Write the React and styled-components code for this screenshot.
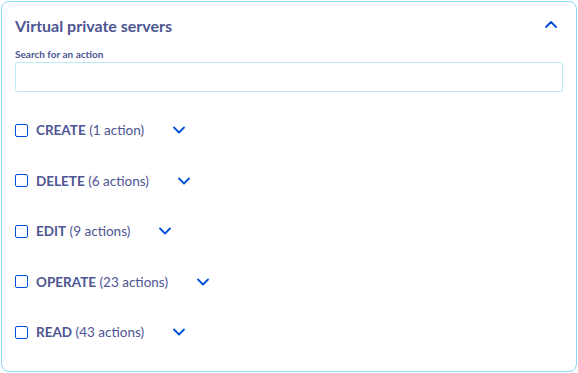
import React from "react";
import styled, { createGlobalStyle } from "styled-components";

const GlobalStyle = createGlobalStyle`
  body {
    margin: 0;
    background: #ffffff;
    font-family: Lato, "Liberation Sans", sans-serif;
  }
`;

const groups = [
  { name: "CREATE", count: "1 action" },
  { name: "DELETE", count: "6 actions" },
  { name: "EDIT", count: "9 actions" },
  { name: "OPERATE", count: "23 actions" },
  { name: "READ", count: "43 actions" },
];

const Chevron = ({ up }) => (
  <svg width="12" height="8" viewBox="0 0 12 8" fill="none">
    <path
      d={up ? "M1 7 L6 2 L11 7" : "M1 1.5 L6 6.5 L11 1.5"}
      stroke="#0050d7"
      strokeWidth="1.8"
      strokeLinecap="round"
      strokeLinejoin="round"
    />
  </svg>
);

const App = () => {
  return (
    <>
      <GlobalStyle />
      <Page>
        <Card>
          <Header>
            <Title>Virtual private servers</Title>
            <IconButton>
              <Chevron up />
            </IconButton>
          </Header>
          <Label>Search for an action</Label>
          <SearchInput />
          <List>
            {groups.map((g) => (
              <Row key={g.name}>
                <Box />
                <RowText>
                  <strong>{g.name}</strong> ({g.count})
                </RowText>
                <Toggle>
                  <Chevron />
                </Toggle>
              </Row>
            ))}
          </List>
        </Card>
      </Page>
    </>
  );
};

export default App;

const Page = styled.div`
  padding: 1px 1px 0 1px;
`;

const Card = styled.div`
  width: 576px;
  height: 371px;
  box-sizing: border-box;
  border: 1px solid #8ad8f5;
  border-radius: 8px;
  padding: 13px 14px 0 13px;
`;

const Header = styled.div`
  display: flex;
  align-items: center;
  justify-content: space-between;
  height: 20px;
`;

const Title = styled.div`
  color: #4d5592;
  font-size: 16px;
  font-weight: 700;
`;

const IconButton = styled.div`
  display: flex;
  align-items: center;
  padding-right: 5px;
  margin-top: -2px;
`;

const Label = styled.div`
  margin-top: 13px;
  color: #4d5592;
  font-size: 10px;
  font-weight: 700;
  line-height: 12px;
`;

const SearchInput = styled.input`
  display: block;
  margin-top: 2px;
  width: 548px;
  height: 30px;
  box-sizing: border-box;
  border: 1px solid #bfeafb;
  border-radius: 2px;
  outline: none;
`;

const List = styled.div`
  display: flex;
  flex-direction: column;
  margin-top: 27px;
  gap: 28.5px;
`;

const Row = styled.div`
  display: flex;
  align-items: center;
  height: 22px;
`;

const Box = styled.div`
  width: 13px;
  height: 13px;
  box-sizing: border-box;
  border: 1.5px solid #0050d7;
  border-radius: 2px;
  margin-right: 8px;
`;

const RowText = styled.span`
  color: #4d5592;
  font-size: 13.5px;
  strong {
    font-weight: 700;
  }
`;

const Toggle = styled.div`
  display: flex;
  align-items: center;
  margin-left: 29px;
`;
